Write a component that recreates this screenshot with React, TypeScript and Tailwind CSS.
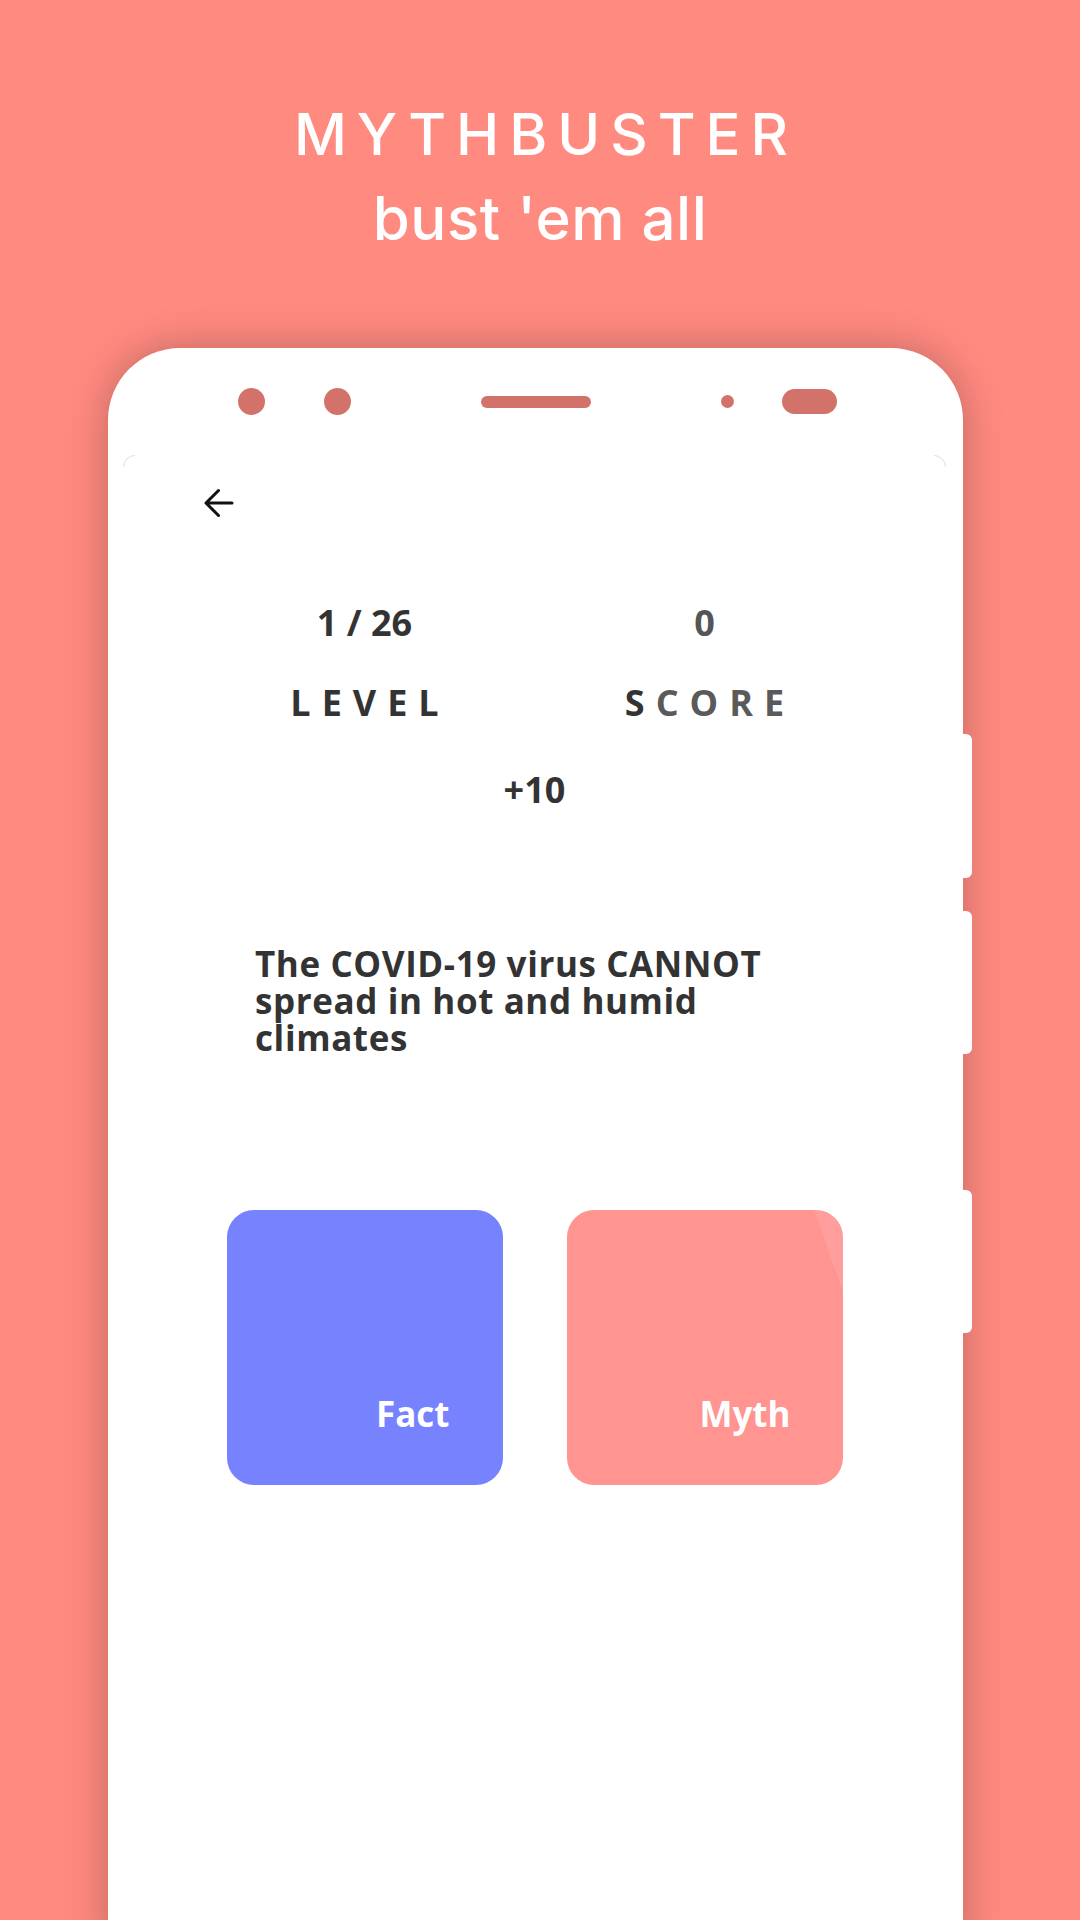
const camDot = 'rounded-full bg-[#d3726a]';

const ScreenCorner = ({ flip }: { flip?: boolean }) => (
  <svg
    width="14"
    height="14"
    viewBox="0 0 14 14"
    className={flip ? 'absolute right-0 top-0 -scale-x-100' : 'absolute left-0 top-0'}
  >
    <path d="M0.5 12 A11.5 11.5 0 0 1 12 0.5" fill="none" stroke="#dedede" strokeWidth="1" />
  </svg>
);

const BackArrow = () => (
  <svg width="32" height="32" viewBox="0 0 32 32" className="ml-[80px] mt-[32px]">
    <path
      d="M29 16H3M15.5 3.5L3 16l12.5 12.5"
      fill="none"
      stroke="#111"
      strokeWidth="3"
      strokeLinecap="round"
      strokeLinejoin="round"
    />
  </svg>
);

const App = () => {
  return (
    <div className="w-[1080px] h-[1920px] overflow-hidden bg-[#ff8a80] flex flex-col">
      {/* heading */}
      <div className="pt-[105px] flex flex-col items-center text-white font-['Inter',sans-serif]">
        <h1 className="text-[58px] leading-[58px] font-medium tracking-[10px] pl-[12px]">MYTHBUSTER</h1>
        <p className="mt-[26px] text-[60px] leading-[58px] font-medium tracking-[0.5px]">bust 'em all</p>
      </div>

      {/* phone mockup */}
      <div className="mt-[101px] ml-[108px] flex items-start">
        <div className="w-[855px] h-[1600px] bg-white rounded-t-[72px] shadow-[0_0_40px_rgba(0,0,0,0.25)] flex flex-col">
          <div className="h-[107px] flex items-center pl-[130px]">
            <span className={`w-[27px] h-[27px] ${camDot}`} />
            <span className={`ml-[59px] w-[27px] h-[27px] ${camDot}`} />
            <span className={`ml-[130px] w-[110px] h-[12px] ${camDot}`} />
            <span className={`ml-[130px] w-[13px] h-[13px] ${camDot}`} />
            <span className={`ml-[48px] w-[55px] h-[25px] ${camDot}`} />
          </div>

          <div className="relative ml-[15px] w-[823px] flex-1 bg-white rounded-t-[12px] flex flex-col font-['Open_Sans',sans-serif] text-[#333]">
            <ScreenCorner />
            <ScreenCorner flip />

            <BackArrow />

            <div className="mt-[86px] mx-auto w-[680px] grid grid-cols-2 font-bold">
              <div className="text-center text-[36px] leading-[36px]">1 / 26</div>
              <div className="text-center text-[36px] leading-[36px] text-[#555]">0</div>
              <div className="mt-[44px] text-center text-[36px] leading-[36px] tracking-[11px] pl-[11px]">
                LEVEL
              </div>
              <div className="mt-[44px] text-center text-[36px] leading-[36px] tracking-[11px] pl-[11px] text-[#5a5a5a]">
                <span className="text-[#333]">S</span>CORE
              </div>
            </div>

            <div className="mt-[51px] text-center text-[36px] leading-[36px] font-bold">+10</div>

            <p className="mt-[137px] ml-[132px] text-[35px] leading-[37px] font-bold tracking-[0.6px]">
              The COVID-19 virus CANNOT
              <br />
              spread in hot and humid
              <br />
              climates
            </p>

            <div className="mt-[154px] flex justify-center gap-[64px]">
              <button className="w-[276px] h-[275px] rounded-[27px] bg-[#7782fe] flex flex-col items-end pt-[186px] pr-[53px]">
                <span className="text-white text-[35px] leading-[35px] font-bold">Fact</span>
              </button>
              <button className="relative overflow-hidden w-[276px] h-[275px] rounded-[27px] bg-[#ff9491] flex flex-col items-end pt-[186px] pr-[52px]">
                <svg width="276" height="275" className="absolute left-0 top-0">
                  <polygon points="247,0 276,0 276,82" fill="#ffffff" fillOpacity="0.1" />
                </svg>
                <span className="relative text-white text-[35px] leading-[35px] font-bold">Myth</span>
              </button>
            </div>
          </div>
        </div>

        {/* side keys */}
        <div className="flex flex-col pt-[386px]">
          <span className="w-[9px] h-[144px] bg-white rounded-r-[6px]" />
          <span className="mt-[33px] w-[9px] h-[143px] bg-white rounded-r-[6px]" />
          <span className="mt-[136px] w-[9px] h-[143px] bg-white rounded-r-[6px]" />
        </div>
      </div>
    </div>
  );
};

export default App;
